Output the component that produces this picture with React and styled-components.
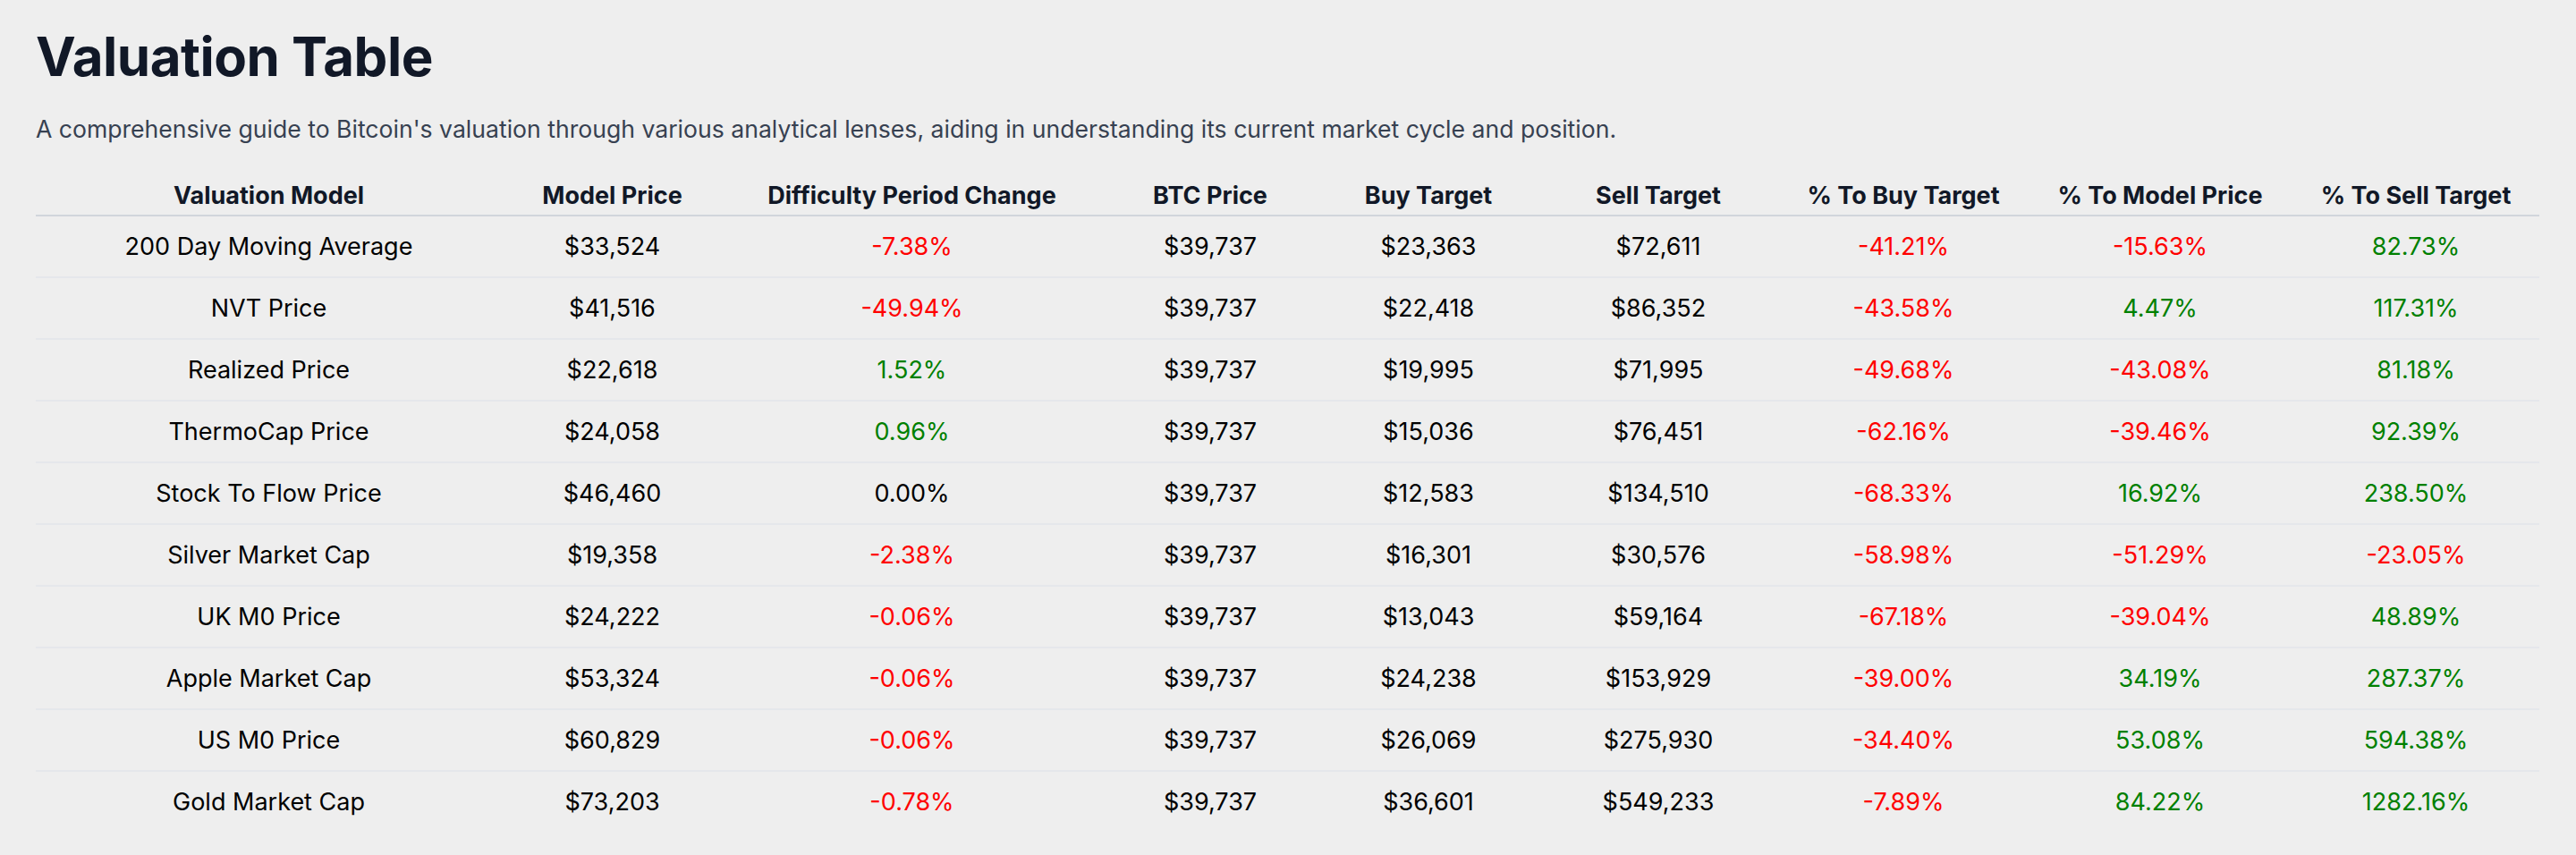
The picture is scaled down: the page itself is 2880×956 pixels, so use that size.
import { createGlobalStyle, styled } from 'styled-components';

const GlobalStyle = createGlobalStyle`
  body {
    margin: 0;
    background: #eeeeee;
    font-family: Inter, "Noto Sans", sans-serif;
  }
`;

const Page = styled.main`
  padding: 33px 42px 0 40px;
`;

const Title = styled.h1`
  margin: 0;
  font-size: 60px;
  line-height: 60px;
  font-weight: 700;
  letter-spacing: -0.5px;
  color: #111827;
`;

const Subtitle = styled.p`
  margin: 31px 0 0;
  font-size: 26.6px;
  line-height: 40px;
  color: #374151;
`;

const Table = styled.table`
  margin-top: 34px;
  width: 100%;
  table-layout: fixed;
  border-collapse: collapse;
`;

const Col = styled.col`
  width: ${({ $w }) => $w}px;
`;

const Th = styled.th`
  padding: 0;
  font-size: 27px;
  line-height: 42px;
  font-weight: 700;
  color: #111827;
  text-align: center;
  border-bottom: 2px solid #d1d5db;
`;

const Row = styled.tr`
  border-bottom: 2px solid #e5e7eb;
  &:last-child {
    border-bottom: none;
  }
`;

const Td = styled.td`
  padding: 13.5px 8px;
  font-size: 27px;
  line-height: 40px;
  text-align: center;
  color: ${({ $tone }) =>
    $tone === 'up' ? '#008000' : $tone === 'down' ? '#ff0000' : '#000000'};
`;

const columns = [
  ['Valuation Model', 521],
  ['Model Price', 247],
  ['Difficulty Period Change', 423],
  ['BTC Price', 244],
  ['Buy Target', 244],
  ['Sell Target', 270],
  ['% To Buy Target', 278],
  ['% To Model Price', 296],
  ['% To Sell Target', 276],
];

const rows = [
  ['200 Day Moving Average', '$33,524', '-7.38%', '$39,737', '$23,363', '$72,611', '-41.21%', '-15.63%', '82.73%'],
  ['NVT Price', '$41,516', '-49.94%', '$39,737', '$22,418', '$86,352', '-43.58%', '4.47%', '117.31%'],
  ['Realized Price', '$22,618', '1.52%', '$39,737', '$19,995', '$71,995', '-49.68%', '-43.08%', '81.18%'],
  ['ThermoCap Price', '$24,058', '0.96%', '$39,737', '$15,036', '$76,451', '-62.16%', '-39.46%', '92.39%'],
  ['Stock To Flow Price', '$46,460', '0.00%', '$39,737', '$12,583', '$134,510', '-68.33%', '16.92%', '238.50%'],
  ['Silver Market Cap', '$19,358', '-2.38%', '$39,737', '$16,301', '$30,576', '-58.98%', '-51.29%', '-23.05%'],
  ['UK M0 Price', '$24,222', '-0.06%', '$39,737', '$13,043', '$59,164', '-67.18%', '-39.04%', '48.89%'],
  ['Apple Market Cap', '$53,324', '-0.06%', '$39,737', '$24,238', '$153,929', '-39.00%', '34.19%', '287.37%'],
  ['US M0 Price', '$60,829', '-0.06%', '$39,737', '$26,069', '$275,930', '-34.40%', '53.08%', '594.38%'],
  ['Gold Market Cap', '$73,203', '-0.78%', '$39,737', '$36,601', '$549,233', '-7.89%', '84.22%', '1282.16%'],
];

// percent columns get coloured by sign, zero stays black
const percentCols = [2, 6, 7, 8];

function toneOf(value, index) {
  if (!percentCols.includes(index)) return undefined;
  const n = parseFloat(value);
  if (n > 0) return 'up';
  if (n < 0) return 'down';
  return undefined;
}

export default function App() {
  return (
    <>
      <GlobalStyle />
      <Page>
        <Title>Valuation Table</Title>
        <Subtitle>
          A comprehensive guide to Bitcoin's valuation through various analytical lenses, aiding in
          understanding its current market cycle and position.
        </Subtitle>
        <Table>
          <colgroup>
            {columns.map(([name, w]) => (
              <Col key={name} $w={w} />
            ))}
          </colgroup>
          <thead>
            <tr>
              {columns.map(([name]) => (
                <Th key={name}>{name}</Th>
              ))}
            </tr>
          </thead>
          <tbody>
            {rows.map((row) => (
              <Row key={row[0]}>
                {row.map((cell, i) => (
                  <Td key={i} $tone={toneOf(cell, i)}>
                    {cell}
                  </Td>
                ))}
              </Row>
            ))}
          </tbody>
        </Table>
      </Page>
    </>
  );
}
